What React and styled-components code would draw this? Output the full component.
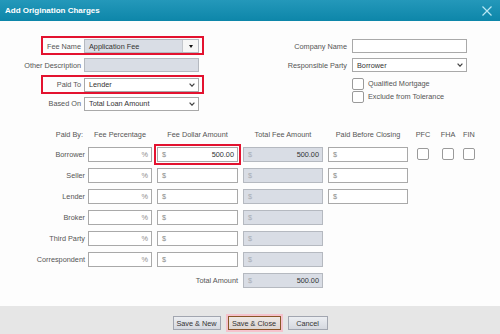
import React from "react";
import styled, { createGlobalStyle, css } from "styled-components";

const GlobalStyle = createGlobalStyle`
  html, body { margin: 0; padding: 0; }
  body { font-family: "Liberation Sans", Arial, sans-serif; background: #fdfdfd; }
`;

const Dialog = styled.div`
  width: 500px;
  height: 334px;
  display: flex;
  flex-direction: column;
  background: #fdfdfd;
  overflow: hidden;
  font-size: 7.3px;
  color: #555;
`;

const TitleBar = styled.div`
  height: 21px;
  flex: none;
  display: flex;
  align-items: center;
  justify-content: space-between;
  padding: 0 8px 0 5px;
  background: linear-gradient(#2498ba, #0d86a9);
`;

const Title = styled.div`
  color: #fff;
  font-weight: bold;
  font-size: 8px;
`;

const CloseIcon = styled.svg`
  width: 10px;
  height: 10px;
  display: block;
`;

const Body = styled.div`
  flex: 1;
  display: flex;
  flex-direction: column;
`;

const TopSection = styled.div`
  display: flex;
  align-items: flex-start;
  gap: 58px;
  padding-top: 18px;
`;

const FormColumn = styled.div`
  display: flex;
  flex-direction: column;
  gap: 5.3px;
`;

const marked = css`
  &::after {
    content: "";
    position: absolute;
    left: ${(p) => p.$markLeft}px;
    right: -5px;
    top: -3px;
    bottom: -2px;
    border: 2px solid #e3122f;
    pointer-events: none;
  }
`;

const FieldRow = styled.div`
  position: relative;
  display: grid;
  grid-template-columns: ${(p) => p.$labelW}px 115px;
  column-gap: ${(p) => p.$gap}px;
  align-items: center;
  min-height: 14px;
  ${(p) => p.$mark && marked}
`;

const Label = styled.div`
  text-align: right;
  white-space: nowrap;
  color: #555;
  font-size: 7.3px;
`;

const Box = styled.div`
  position: relative;
  height: 14px;
  box-sizing: border-box;
  border: 1px solid ${(p) => (p.$grey ? "#b5b9c0" : "#a9a9a9")};
  background: ${(p) => (p.$grey ? "#d9dde5" : "#fff")};
  display: flex;
  align-items: center;
  justify-content: space-between;
  padding: 0 3px 0 4px;
  color: #333;
  font-size: 7.3px;
  white-space: nowrap;
  ${(p) =>
    p.$redBox &&
    css`
      &::after {
        content: "";
        position: absolute;
        inset: -4px -4px -4px -4px;
        border: 2px solid #e3122f;
        pointer-events: none;
      }
    `}
`;

const Combo = styled(Box)`
  padding-right: 0;
`;

const DropButton = styled.div`
  width: 15px;
  height: 100%;
  border-left: 1px solid #c4c7cc;
  background: #f6f6f6;
  display: flex;
  align-items: center;
  justify-content: center;
`;

const Triangle = styled.span`
  width: 0;
  height: 0;
  border-left: 2.5px solid transparent;
  border-right: 2.5px solid transparent;
  border-top: 3px solid #111;
`;

const Chevron = () => (
  <svg width="6" height="4" viewBox="0 0 6 4" style={{ display: "block" }}>
    <polyline points="0.6,0.6 3,3.2 5.4,0.6" fill="none" stroke="#444" strokeWidth="1.2" />
  </svg>
);

const CheckList = styled.div`
  display: flex;
  flex-direction: column;
  gap: 1px;
`;

const CheckLine = styled.label`
  display: flex;
  align-items: center;
  gap: 4px;
  color: #555;
  font-size: 7.3px;
`;

const CheckBox = styled.span`
  width: 12px;
  height: 12px;
  box-sizing: border-box;
  border: 1px solid #9a9a9a;
  border-radius: 2px;
  background: #fff;
  display: inline-block;
  flex: none;
`;

const TableGrid = styled.div`
  display: grid;
  grid-template-columns: 83px 64px 81px 80px 80px 20px 20px 11px;
  column-gap: 5px;
  grid-auto-rows: 15px;
  row-gap: 6px;
  align-items: center;
  margin-top: 15px;
`;

const HeadCell = styled.div`
  align-self: end;
  padding-bottom: 2px;
  text-align: ${(p) => (p.$right ? "right" : "center")};
  white-space: nowrap;
  color: #555;
  font-size: 7.3px;
`;

const RowLabel = styled(Label)`
  grid-column: ${(p) => p.$span || "auto"};
  margin-right: ${(p) => (p.$span ? 0 : -2)}px;
`;

const TBox = styled(Box)`
  height: 15px;
`;

const Muted = styled.span`
  color: ${(p) => (p.$light ? "#a8acb3" : "#8a8a8a")};
`;

const CheckCell = styled.div`
  display: flex;
  justify-content: center;
`;

const Footer = styled.div`
  height: 28px;
  flex: none;
  margin-top: auto;
  background: #e6e6e6;
  display: flex;
  justify-content: center;
  align-items: flex-start;
  gap: 7px;
  padding-top: 10px;
  box-sizing: border-box;
`;

const Button = styled.button`
  width: ${(p) => p.$w}px;
  height: 14px;
  padding: 0;
  box-sizing: border-box;
  font-family: "Liberation Sans", Arial, sans-serif;
  font-size: 7.3px;
  color: #333;
  border: 1px solid ${(p) => (p.$primary ? "#8a5526" : "#a2a6b0")};
  background: ${(p) =>
    p.$primary ? "linear-gradient(#eee8e4, #ddd6d2)" : "linear-gradient(#eceef2, #d5d8df)"};
  box-shadow: ${(p) => (p.$primary ? "0 0 0 2px #f5c3cd" : "none")};
  white-space: nowrap;
`;

const rows = [
  { name: "Borrower", amount: "500.00", paid: true, checks: true, mark: true },
  { name: "Seller", paid: true },
  { name: "Lender", paid: true },
  { name: "Broker" },
  { name: "Third Party" },
  { name: "Correspondent" },
];

export default function App() {
  return (
    <>
      <GlobalStyle />
      <Dialog>
        <TitleBar>
          <Title>Add Origination Charges</Title>
          <CloseIcon viewBox="0 0 10 10">
            <path d="M0.5 0.5 L9.5 9.5 M9.5 0.5 L0.5 9.5" stroke="#b9e7f4" strokeWidth="1.2" fill="none" />
          </CloseIcon>
        </TitleBar>
        <Body>
          <TopSection>
            <FormColumn>
              <FieldRow $labelW={81} $gap={3} $mark $markLeft={41}>
                <Label>Fee Name</Label>
                <Combo $grey>
                  <span>Application Fee</span>
                  <DropButton>
                    <Triangle />
                  </DropButton>
                </Combo>
              </FieldRow>
              <FieldRow $labelW={81} $gap={3}>
                <Label>Other Description</Label>
                <Box $grey />
              </FieldRow>
              <FieldRow $labelW={81} $gap={3} $mark $markLeft={41}>
                <Label>Paid To</Label>
                <Box>
                  <span>Lender</span>
                  <Chevron />
                </Box>
              </FieldRow>
              <FieldRow $labelW={81} $gap={3}>
                <Label>Based On</Label>
                <Box>
                  <span>Total Loan Amount</span>
                  <Chevron />
                </Box>
              </FieldRow>
            </FormColumn>
            <FormColumn>
              <FieldRow $labelW={90} $gap={5}>
                <Label>Company Name</Label>
                <Box />
              </FieldRow>
              <FieldRow $labelW={90} $gap={5}>
                <Label>Responsible Party</Label>
                <Box>
                  <span>Borrower</span>
                  <Chevron />
                </Box>
              </FieldRow>
              <FieldRow $labelW={90} $gap={5}>
                <span />
                <CheckList>
                  <CheckLine>
                    <CheckBox />
                    Qualified Mortgage
                  </CheckLine>
                  <CheckLine>
                    <CheckBox />
                    Exclude from Tolerance
                  </CheckLine>
                </CheckList>
              </FieldRow>
            </FormColumn>
          </TopSection>

          <TableGrid>
            <HeadCell $right>Paid By:</HeadCell>
            <HeadCell>Fee Percentage</HeadCell>
            <HeadCell>Fee Dollar Amount</HeadCell>
            <HeadCell>Total Fee Amount</HeadCell>
            <HeadCell>Paid Before Closing</HeadCell>
            <HeadCell>PFC</HeadCell>
            <HeadCell>FHA</HeadCell>
            <HeadCell>FIN</HeadCell>

            {rows.map((r) => (
              <React.Fragment key={r.name}>
                <RowLabel>{r.name}</RowLabel>
                <TBox style={{ justifyContent: "flex-end" }}>
                  <Muted>%</Muted>
                </TBox>
                <TBox $redBox={r.mark}>
                  <Muted>$</Muted>
                  {r.amount && <span>{r.amount}</span>}
                </TBox>
                <TBox $grey>
                  <Muted $light>$</Muted>
                  {r.amount && <span>{r.amount}</span>}
                </TBox>
                {r.paid ? (
                  <TBox>
                    <Muted>$</Muted>
                  </TBox>
                ) : (
                  <span />
                )}
                {r.checks ? (
                  <>
                    <CheckCell><CheckBox /></CheckCell>
                    <CheckCell><CheckBox /></CheckCell>
                    <CheckCell><CheckBox /></CheckCell>
                  </>
                ) : (
                  <>
                    <span />
                    <span />
                    <span />
                  </>
                )}
              </React.Fragment>
            ))}

            <span />
            <RowLabel $span="2 / 4">Total Amount</RowLabel>
            <TBox $grey>
              <Muted $light>$</Muted>
              <span>500.00</span>
            </TBox>
          </TableGrid>

          <Footer>
            <Button $w={48}>Save &amp; New</Button>
            <Button $w={53} $primary>Save &amp; Close</Button>
            <Button $w={40}>Cancel</Button>
          </Footer>
        </Body>
      </Dialog>
    </>
  );
}
